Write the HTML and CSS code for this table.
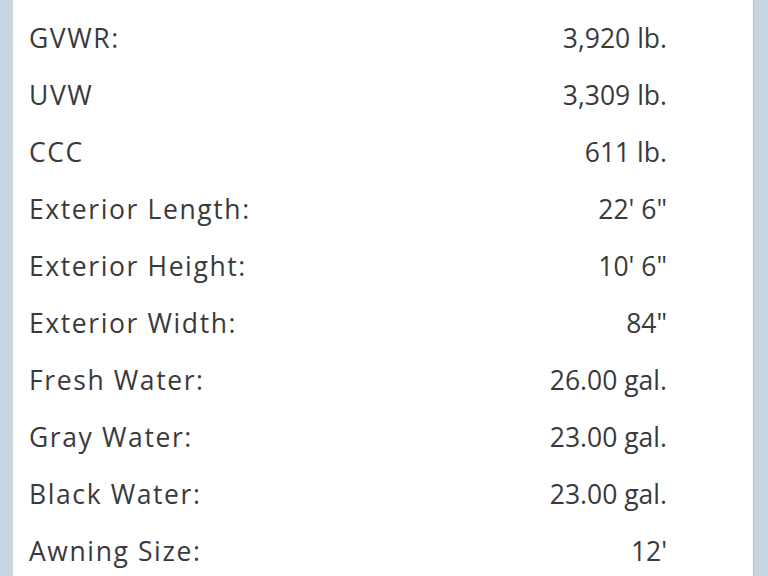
FILE: index.html
```html
<!DOCTYPE html>
<html>
<head>
<meta charset="utf-8">
<link rel="stylesheet" href="styles.css">
</head>
<body>
<div class="page">
  <div class="card">
    <div class="row"><span class="label">GVWR:</span><span class="value">3,920 lb.</span></div>
    <div class="row"><span class="label">UVW</span><span class="value">3,309 lb.</span></div>
    <div class="row"><span class="label">CCC</span><span class="value">611 lb.</span></div>
    <div class="row"><span class="label">Exterior Length:</span><span class="value">22' 6"</span></div>
    <div class="row"><span class="label">Exterior Height:</span><span class="value">10' 6"</span></div>
    <div class="row"><span class="label">Exterior Width:</span><span class="value">84"</span></div>
    <div class="row"><span class="label">Fresh Water:</span><span class="value">26.00 gal.</span></div>
    <div class="row"><span class="label">Gray Water:</span><span class="value">23.00 gal.</span></div>
    <div class="row"><span class="label">Black Water:</span><span class="value">23.00 gal.</span></div>
    <div class="row"><span class="label">Awning Size:</span><span class="value">12'</span></div>
  </div>
</div>
</body>
</html>
```
FILE: styles.css
```css
html, body {
  margin: 0;
  padding: 0;
  background: #c9d5de;
  height: 576px;
  overflow: hidden;
}
.page {
  display: flex;
  padding: 0 14px 0 13px;
  height: 576px;
}
.card {
  flex: 1;
  background: #ffffff;
  border-right: 1px solid #b9c2c8;
  padding: 9px 86px 0 16px;
  font-family: "Open Sans", sans-serif;
  font-size: 26.5px;
  color: #3a3a3a;
}
.row {
  display: flex;
  justify-content: space-between;
  align-items: center;
  height: 57.1px;
}
.label {
  letter-spacing: 1.6px;
}
.value {
  letter-spacing: 0;
}
```
